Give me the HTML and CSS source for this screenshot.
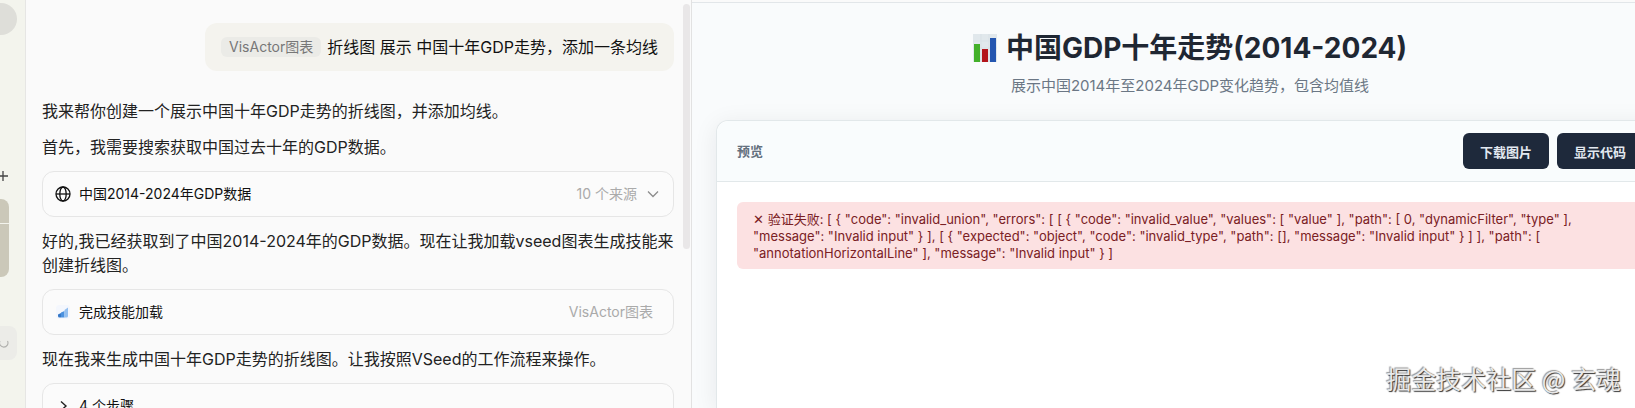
FILE: index.html
```
<!DOCTYPE html>
<html lang="zh-CN">
<head>
    <meta charset="UTF-8">
    <meta name="viewport" content="width=device-width, initial-scale=1.0">
    <title>中国GDP十年走势</title>
    <link rel="stylesheet" href="styles.css">
</head>
<body>
    <nav class="sidebar" aria-label="会话">
        <div class="avatar"></div>
        <button class="new-chat" aria-label="新建">
            <svg width="10" height="10" viewBox="0 0 10 10"><path d="M5 0v10M0 5h10" stroke="#444" stroke-width="1.3"/></svg>
        </button>
        <div class="thumb thumb-top"></div>
        <div class="thumb thumb-bottom"></div>
        <div class="loading">
            <svg width="10" height="10" viewBox="0 0 10 10" fill="none"><path d="M1 3a4.200 4.200 0 1 0 7.500 0" stroke="#b0b0ad" stroke-width="1.1"/></svg>
        </div>
    </nav>

    <main class="chat">
        <div class="user-message">
            <span class="skill-tag">VisActor图表</span>
            <span>折线图 展示 中国十年GDP走势，添加一条均线</span>
        </div>
        <p>我来帮你创建一个展示中国十年GDP走势的折线图，并添加均线。</p>
        <p>首先，我需要搜索获取中国过去十年的GDP数据。</p>
        <button class="step">
            <svg class="step-icon" viewBox="0 0 16 16" fill="none" stroke="#111" stroke-width="1.3"><circle cx="8" cy="8" r="7"/><ellipse cx="8" cy="8" rx="3.2" ry="7"/><path d="M1 8h14"/></svg>
            <span class="step-title">中国2014-2024年GDP数据</span>
            <span class="step-info">10 个来源</span>
            <svg class="chevron" viewBox="0 0 12 12" fill="none" stroke="#8c8c8c" stroke-width="1.3"><path d="M1 3.500l5 5 5-5"/></svg>
        </button>
        <p>好的,我已经获取到了中国2014-2024年的GDP数据。现在让我加载vseed图表生成技能来创建折线图。</p>
        <button class="step">
            <svg class="step-icon" viewBox="0 0 16 16">
                <rect x="1" y="1" width="14" height="14" rx="3" fill="#f4f7fd"/>
                <path d="M3 10.500l3-1.500v4.500H4.500q-1.500 0-1.500-1.500z" fill="#3578c8"/>
                <path d="M6 8.500l3.500-1.500v6.500H6z" fill="#4b91df"/>
                <path d="M9.500 6l3.500-2.500V12q0 1.500-1.500 1.500h-2z" fill="#93bff0"/>
            </svg>
            <span class="step-title">完成技能加载</span>
            <span class="step-info">VisActor图表</span>
        </button>
        <p>现在我来生成中国十年GDP走势的折线图。让我按照VSeed的工作流程来操作。</p>
        <button class="step">
            <svg class="step-icon" viewBox="0 0 16 16" fill="none" stroke="#222" stroke-width="1.4"><path d="M6 3.500l5 4.500-5 4.500"/></svg>
            <span class="step-title">4 个步骤</span>
        </button>
        <div class="scroll-thumb"></div>
    </main>

    <section class="preview">
        <div class="report">
            <header class="report-header">
                <h1>
                    <svg class="chart-icon" viewBox="0 0 24 28">
                        <rect width="24" height="28" fill="#e1e8ec"/>
                        <path d="M0 7h24M0 14h24M0 21h24M8 0v28M16 0v28" stroke="#d9e1e6"/>
                        <rect x="1" y="10" width="6" height="18" fill="#43b02a"/>
                        <rect x="9" y="15" width="6" height="13" fill="#b3151b"/>
                        <rect x="17" y="4" width="6" height="24" fill="#2456b0"/>
                    </svg>
                    <span>中国GDP十年走势(2014-2024)</span>
                </h1>
                <p class="subtitle">展示中国2014年至2024年GDP变化趋势，包含均值线</p>
            </header>
            <div class="card">
                <div class="card-header">
                    <h2>预览</h2>
                    <div class="actions">
                        <button class="button">下载图片</button>
                        <button class="button">显示代码</button>
                    </div>
                </div>
                <div class="card-body">
                    <div class="error" role="alert">✕ 验证失败: [ { "code": "invalid_union", "errors": [ [ { "code": "invalid_value", "values": [ "value" ], "path": [ 0, "dynamicFilter", "type" ], "message": "Invalid input" } ], [ { "expected": "object", "code": "invalid_type", "path": [], "message": "Invalid input" } ] ], "path": [ "annotationHorizontalLine" ], "message": "Invalid input" } ]</div>
                </div>
            </div>
        </div>
        <div class="watermark">掘金技术社区 @ 玄魂</div>
    </section>
</body>
</html>
```

FILE: styles.css
```
* {
    box-sizing: border-box;
}
body {
    font-family: Inter, "Noto Sans CJK SC", sans-serif;
    margin: 0;
    height: 100vh;
    display: flex;
    overflow: hidden;
    background-color: #fafafa;
    color: #222;
}
h1, h2, p {
    margin: 0;
}
button {
    font-family: inherit;
    cursor: pointer;
}

/* left rail */
.sidebar {
    flex: 0 0 25px;
    display: flex;
    flex-direction: column;
    align-items: flex-start;
    overflow: hidden;
    background-color: #f3f4ed;
}
.avatar {
    width: 32px;
    height: 32px;
    margin: 3px 0 0 -15px;
    flex: none;
    border-radius: 50%;
    background-color: #deded9;
}
.new-chat {
    display: flex;
    margin: 136px 0 18px -2px;
    padding: 0;
    border: none;
    background: none;
}
.thumb {
    width: 32px;
    flex: none;
    margin-left: -23px;
    background-color: #cbc8b9;
}
.thumb-top {
    height: 24px;
    border-radius: 0 8px 0 0;
}
.thumb-bottom {
    height: 53px;
    margin-top: 1px;
    border-radius: 0 0 8px 0;
}
.loading {
    display: flex;
    align-items: center;
    justify-content: flex-end;
    width: 32px;
    height: 34px;
    flex: none;
    margin: 49px 0 0 -15px;
    padding-right: 8px;
    border-radius: 8px;
    background-color: #ecece8;
}

/* chat column */
.chat {
    position: relative;
    flex: 0 0 667px;
    display: flex;
    flex-direction: column;
    gap: 12px;
    padding: 23px 17px 0 16px;
    overflow: hidden;
    border-left: 1px solid #e6e6e4;
    border-right: 1px solid #e2e2e2;
    background-color: #fafafa;
    font-size: 16px;
    line-height: 24px;
}
.user-message {
    align-self: flex-end;
    display: flex;
    align-items: center;
    gap: 6px;
    margin-bottom: 16px;
    padding: 12px 16px;
    border-radius: 12px;
    background-color: #f4f3ee;
    color: #111;
}
.skill-tag {
    padding: 0 8px;
    border-radius: 6px;
    background-color: #ebebe7;
    color: #777;
    font-size: 14px;
    line-height: 20px;
}
.step {
    display: flex;
    align-items: center;
    flex: none;
    height: 46px;
    padding: 0 14px 0 12px;
    border: 1px solid #e6e6e6;
    border-radius: 12px;
    background-color: #fbfbfb;
    color: #111;
    font-size: 14px;
    line-height: 20px;
}
.step-icon {
    width: 16px;
    height: 16px;
    margin-right: 8px;
}
.step-info {
    margin-left: auto;
    padding-right: 6px;
    color: #aaa;
}
.chevron {
    width: 12px;
    height: 12px;
    margin-left: 4px;
}
.scroll-thumb {
    position: absolute;
    top: 4px;
    right: 1px;
    width: 7px;
    height: 245px;
    border-radius: 4px;
    background-color: #e9e7e8;
}

/* preview column */
.preview {
    position: relative;
    flex: 1;
    min-width: 0;
    overflow: hidden;
    background-color: #f9fbfc;
    border-top: 2px solid #fafafa;
}
.report {
    height: 100%;
    margin-right: -53px;
    padding: 0 24px;
    display: flex;
    flex-direction: column;
    border-top: 1px solid #e2e6e9;
}
.report-header {
    padding: 25px 0 23px;
    text-align: center;
}
h1 {
    display: flex;
    justify-content: center;
    align-items: center;
    gap: 9px;
    color: #1f2733;
    font-size: 28px;
    line-height: 40px;
}
.chart-icon {
    width: 24px;
    height: 28px;
}
.subtitle {
    margin-top: 7px;
    color: #6b7785;
    font-size: 15px;
    line-height: 22px;
}
.card {
    flex: 1;
    border: 1px solid #e2e8ea;
    border-bottom: none;
    border-radius: 12px 12px 0 0;
    background-color: #fff;
    box-shadow: 0 4px 24px rgba(15, 23, 42, 0.08);
}
.card-header {
    display: flex;
    justify-content: space-between;
    align-items: center;
    padding: 12px 20px;
    border-bottom: 1px solid #e2e8ea;
    border-radius: 12px 12px 0 0;
    background-color: #f9fcfd;
}
h2 {
    color: #64707e;
    font-size: 13px;
    line-height: 20px;
}
.actions {
    display: flex;
    gap: 8px;
}
.button {
    height: 36px;
    padding: 0 17px;
    border: none;
    border-radius: 6px;
    background-color: #1e293b;
    color: #e2e8f0;
    font-size: 13px;
    font-weight: 600;
}
.card-body {
    padding: 20px;
}
.error {
    padding: 9px 16px 7px;
    border-radius: 6px;
    background-color: #fce1e2;
    color: #7a2024;
    font-size: 13px;
    line-height: 17px;
}
.watermark {
    position: absolute;
    right: 14px;
    bottom: 12px;
    color: #e9e9e9;
    font-family: "Noto Sans CJK SC", sans-serif;
    font-size: 25px;
    line-height: 36px;
    text-shadow: 1px 1px 1px #333, -1px -1px 1px #999;
}
```
